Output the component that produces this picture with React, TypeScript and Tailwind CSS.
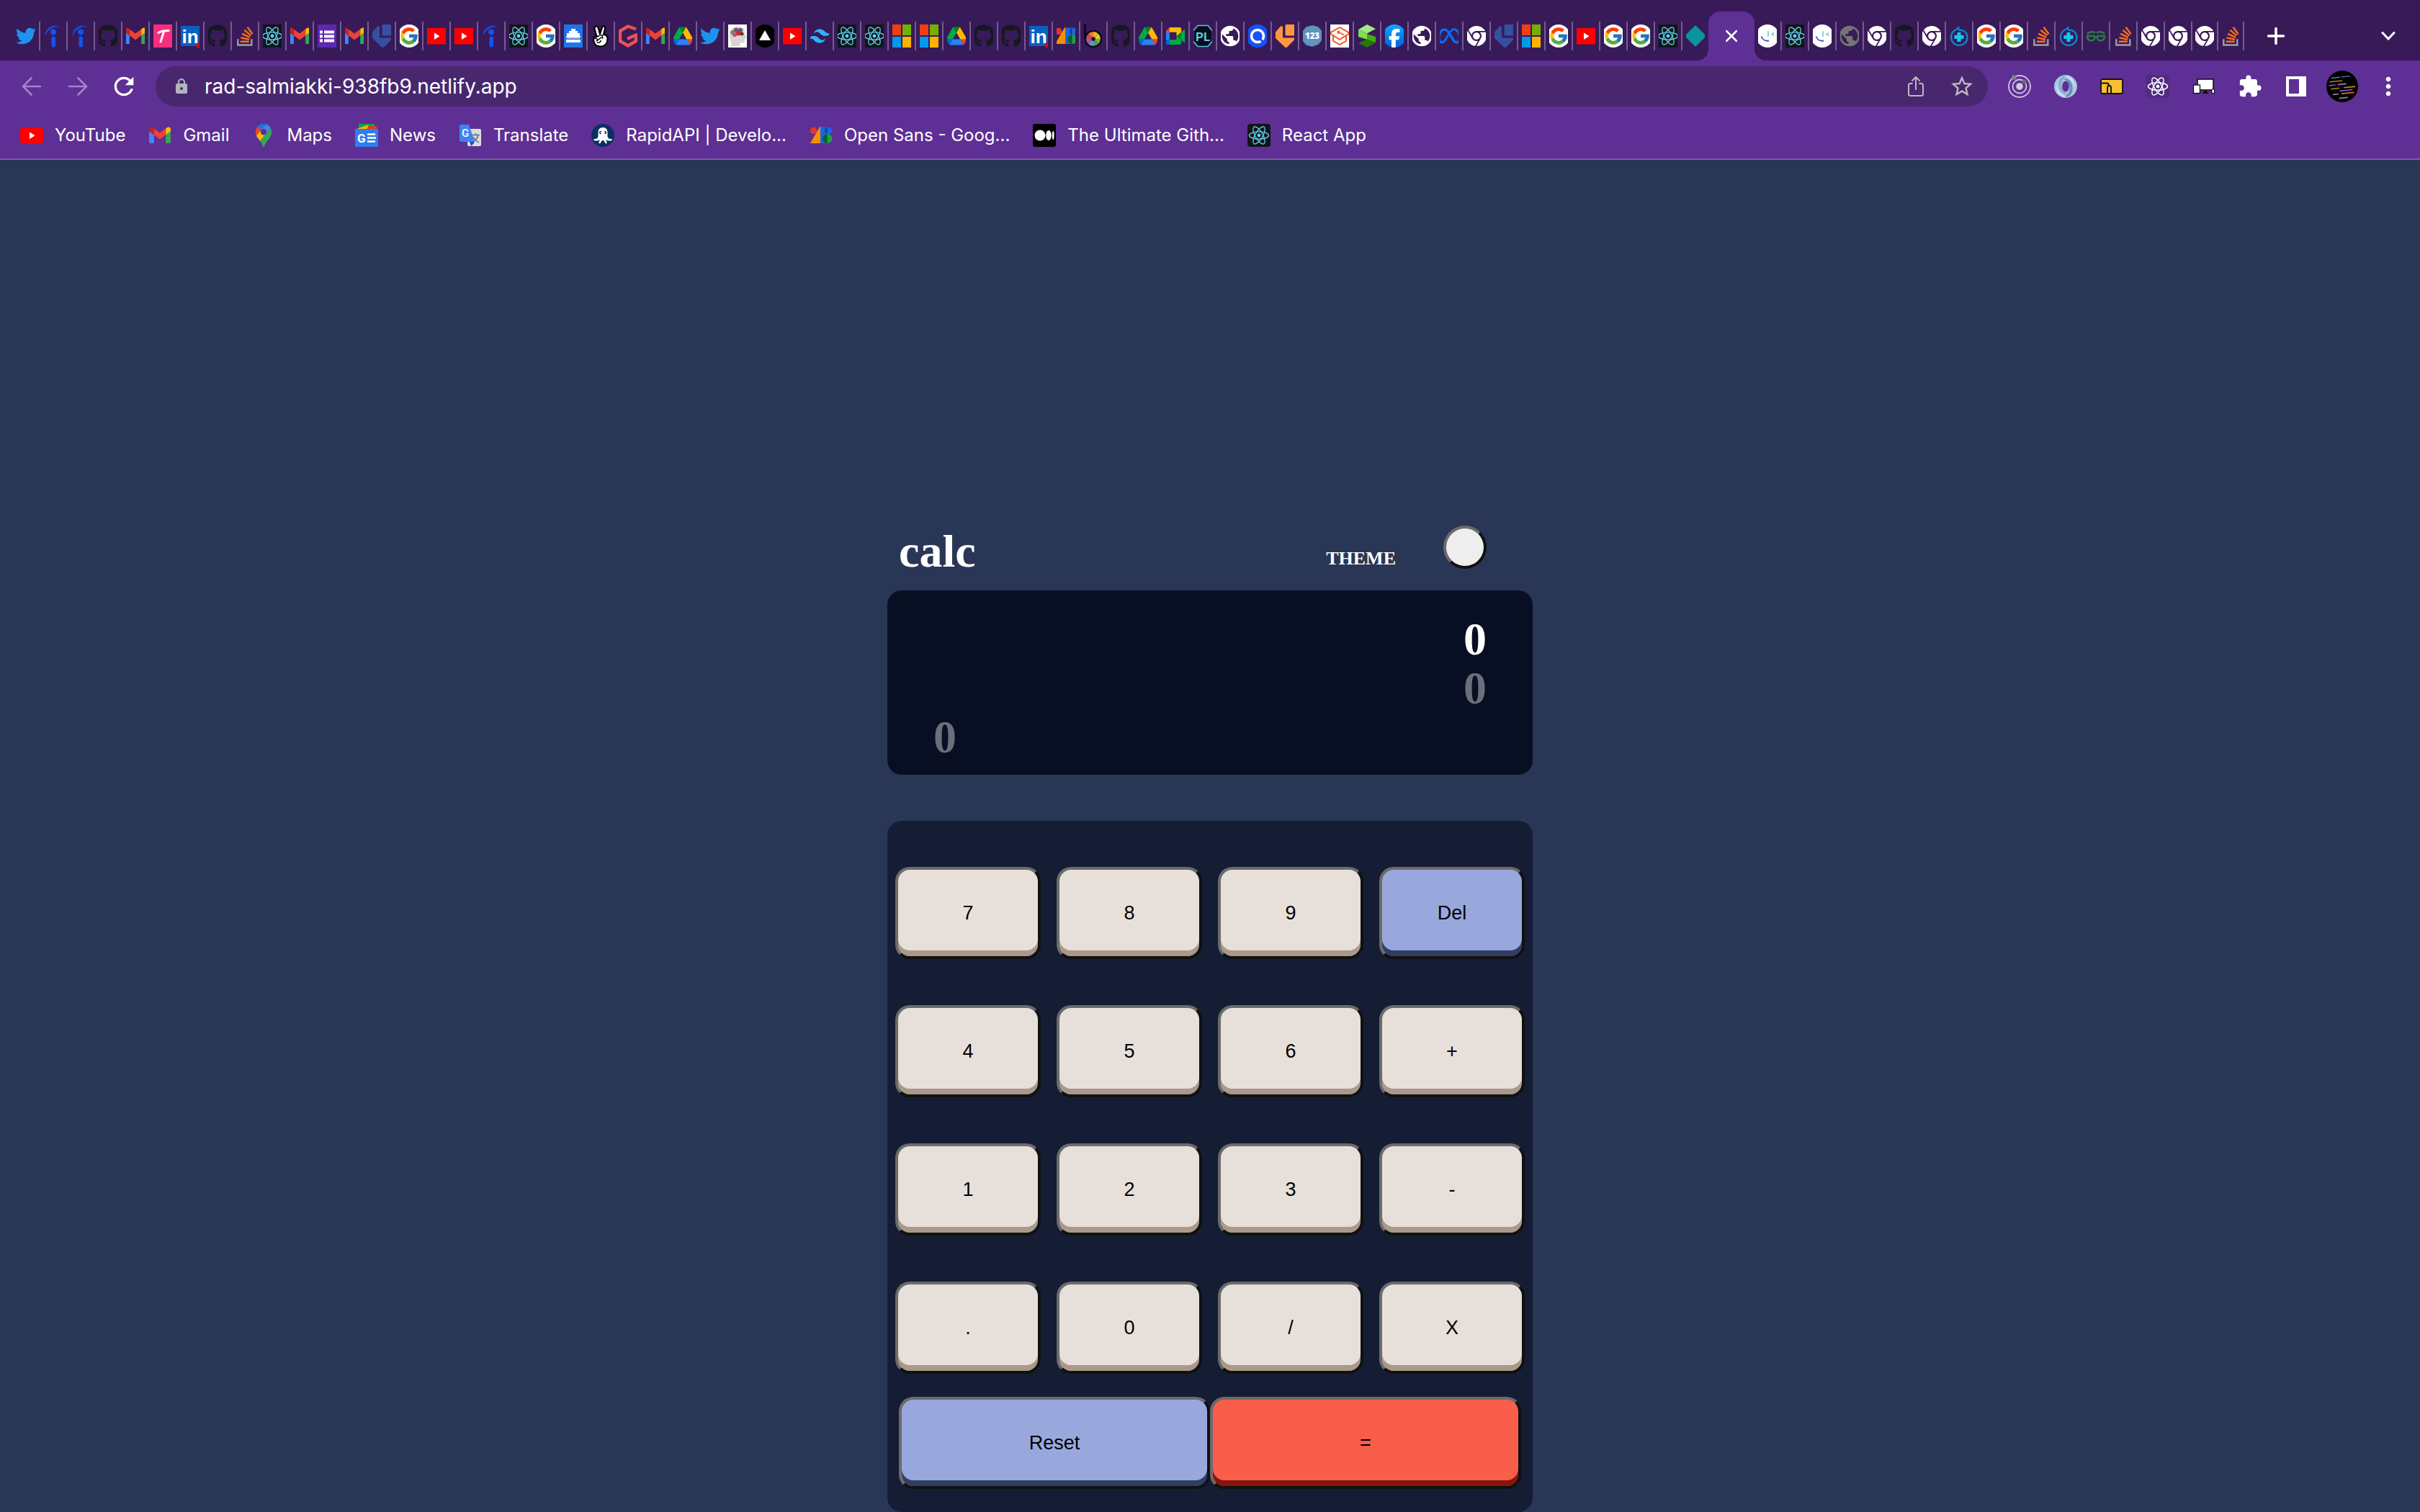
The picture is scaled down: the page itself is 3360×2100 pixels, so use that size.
import type { ReactNode } from "react";
import { FaChrome, FaFacebookF, FaGithub, FaMeta, FaTwitter } from "react-icons/fa6";
import { FcGoogle } from "react-icons/fc";
import { IoShareOutline } from "react-icons/io5";
import { MdExtension, MdLock, MdMoreVert, MdPublic, MdRefresh, MdStarBorder } from "react-icons/md";

function Art({ children, viewBox = "0 0 32 32" }: { children: ReactNode; viewBox?: string }) {
  return (
    <svg viewBox={viewBox} className="size-8 shrink-0" aria-hidden="true">
      {children}
    </svg>
  );
}

function Orbits({ color, width = 1.3 }: { color: string; width?: number }) {
  return (
    <g fill="none" stroke={color} strokeWidth={width}>
      <ellipse cx="16" cy="16" rx="13.5" ry="5.2" />
      <ellipse cx="16" cy="16" rx="13.5" ry="5.2" transform="rotate(60 16 16)" />
      <ellipse cx="16" cy="16" rx="13.5" ry="5.2" transform="rotate(120 16 16)" />
      <circle cx="16" cy="16" r="2.4" fill={color} stroke="none" />
    </g>
  );
}

const Twitter = () => <FaTwitter className="size-7 shrink-0 text-[#1d93f0]" />;
const Github = () => <FaGithub className="size-8 shrink-0 text-[#15191f]" />;
const Chrome = () => <FaChrome className="size-7 shrink-0 text-white" />;
const Globe = () => <MdPublic className="size-[34px] shrink-0 text-white" />;
const GrayGlobe = () => <MdPublic className="size-[34px] shrink-0 text-[#757575]" />;
const Meta = () => <FaMeta className="size-8 shrink-0 text-[#0a6cf0]" />;

const Indeed = () => (
  <Art>
    <circle cx="16" cy="10.5" r="4" fill="#1253f0" />
    <rect x="13.5" y="16.5" width="5.5" height="15" rx="2.6" fill="#1253f0" />
    <path d="M4 16.500C5 8 11 2 18 1.800C21 1.700 23.500 2.600 25.500 4.600C22 2.800 18 2.800 14 5C9 7.600 6 12 4 16.500Z" fill="#1253f0" />
  </Art>
);

const Gmail = () => (
  <Art viewBox="49 31 94 90">
    <path fill="#4285f4" d="M58 108h14V74L52 59v43c0 3.320 2.690 6 6 6" />
    <path fill="#34a853" d="M120 108h14c3.320 0 6-2.690 6-6V59l-20 15" />
    <path fill="#fbbc04" d="M120 48v26l20-15v-8c0-7.420-8.470-11.650-14.400-7.200" />
    <path fill="#ea4335" d="M72 74V48l24 18 24-18v26L96 92" />
    <path fill="#c5221f" d="M52 51v8l20 15V48l-5.600-4.200c-5.940-4.450-14.400-.22-14.400 7.200" />
  </Art>
);

const Drive = () => (
  <Art viewBox="-6 -10.5 99 99">
    <path fill="#0066da" d="m6.600 66.850 3.850 6.650c.8 1.400 1.950 2.500 3.300 3.300l13.750-23.800h-27.500c0 1.550.4 3.100 1.200 4.500z" />
    <path fill="#00ac47" d="m43.650 25-13.750-23.800c-1.350.8-2.500 1.900-3.300 3.300l-25.400 44a9.060 9.060 0 0 0-1.200 4.500h27.500z" />
    <path fill="#ea4335" d="m73.550 76.800c1.350-.8 2.500-1.900 3.300-3.300l1.600-2.750 7.650-13.250c.8-1.400 1.200-2.950 1.200-4.500h-27.500l5.850 11.500z" />
    <path fill="#00832d" d="m43.650 25 13.750-23.800c-1.350-.8-2.900-1.200-4.500-1.200h-18.500c-1.600 0-3.150.45-4.500 1.200z" />
    <path fill="#2684fc" d="m59.800 53h-32.300l-13.750 23.800c1.350.8 2.900 1.200 4.500 1.200h50.800c1.600 0 3.150-.45 4.500-1.200z" />
    <path fill="#ffba00" d="m73.400 26.500-12.700-22c-.8-1.400-1.950-2.500-3.300-3.300l-13.750 23.800 16.150 28h27.450c0-1.550-.4-3.100-1.200-4.500z" />
  </Art>
);

const Meet = () => (
  <Art viewBox="-3 -12 96 96">
    <path fill="#00832d" d="m49.500 36 8.530 9.750 11.470 7.330 2-17.020-2-16.640-11.690 6.440z" />
    <path fill="#0066da" d="M0 51.500V66c0 3.315 2.685 6 6 6h14.500l3-10.960-3-9.540-9.950-3z" />
    <path fill="#e94235" d="M20.500 0 0 20.500l10.550 3 9.950-3 2.950-9.410z" />
    <path fill="#2684fc" d="M20.500 20.500H0v31h20.500z" />
    <path fill="#00ac47" d="M82.600 8.680 69.500 19.420v33.660l13.160 10.790c1.970 1.540 4.850.135 4.850-2.370V11c0-2.535-2.945-3.925-4.910-2.320zM49.500 36v15.500h-29V72h43c3.315 0 6-2.685 6-6V53.080z" />
    <path fill="#ffba00" d="M63.500 0h-43v20.500h29V36l20-16.570V6c0-3.315-2.685-6-6-6z" />
  </Art>
);

const StackOverflow = () => (
  <Art viewBox="6 5 104 104">
    <path fill="#9aa0a6" d="M84.400 93.800V70.600h7.700v30.900H22.600V70.600h7.700v23.200z" />
    <path
      fill="#f9701a"
      d="M38.800 68.400l37.800 7.900 1.600-7.600-37.800-7.900-1.600 7.600zm5-18l35 16.300 3.200-7-35-16.400-3.200 7.100zm9.700-17.200l29.700 24.700 4.900-5.900-29.700-24.700-4.900 5.900zm19.200-18.300l-6.200 4.600 23 31 6.200-4.600-23-31zM38 86h38.600v-7.700H38V86z"
    />
  </Art>
);

const Topmate = () => (
  <Art>
    <rect width="32" height="32" fill="#f62f7c" />
    <path d="M10 11.500C14 8.500 19 9 24 8.500M17.500 9.500C16.500 14 14.500 19 13 24" fill="none" stroke="#fff" strokeWidth="3" strokeLinecap="round" />
  </Art>
);

const LinkedIn = () => (
  <Art>
    <rect x="2" y="2" width="28" height="28" rx="2" fill="#0a5fc2" />
    <text x="4.500" y="26" fill="#fff" fontFamily="Liberation Sans" fontWeight="700" fontSize="26">in</text>
    <circle cx="29" cy="29" r="4.500" fill="#c8101e" />
  </Art>
);

const ReactTile = () => (
  <Art>
    <rect width="32" height="32" fill="#141518" />
    <Orbits color="#5fd3f0" />
  </Art>
);

const Forms = () => (
  <Art>
    <rect width="32" height="32" fill="#5c28b1" />
    <path d="M6 8.500h4v4H6zM12 8.500h14v4H12zM6 14.500h4v4H6zM12 14.500h14v4H12zM6 20.500h4v4H6zM12 20.500h14v4H12z" fill="#fff" />
  </Art>
);

function Pin({ color }: { color: string }) {
  return (
    <Art>
      <rect x="16.500" y="0" width="14" height="15.500" rx="1.500" fill={color} />
      <path d="M3 10.500L10 2.500H13V18.500H29V21.500L19 31.500Q17.500 32.500 16 31.500L3 19Z" fill={color} />
    </Art>
  );
}
const BluePin = () => <Pin color="#3450a0" />;
const OrangePin = () => <Pin color="#fd9644" />;

const Google = () => (
  <span className="flex size-8 shrink-0 items-center justify-center rounded-full bg-white">
    <FcGoogle className="size-7" />
  </span>
);

const YouTube = () => (
  <Art>
    <rect x="0" y="5" width="32" height="22.500" rx="4" fill="#f00" />
    <path d="M13 11.500V21L20.500 16.200Z" fill="#fff" />
  </Art>
);

const CloudTile = () => (
  <Art>
    <rect width="32" height="32" fill="#1f74e8" />
    <path d="M13 6h6v3h3v3h3v4H7v-4h3V9h3z" fill="#fff" />
    <path d="M6 16h20v2H6zM6 21h20v4H6z" fill="#fff" />
    <path d="M7 17.500h18v2H7z" fill="#b6d0f7" />
  </Art>
);

const Peace = () => (
  <Art>
    <path
      d="M8 3.500C9.500 1.500 12 2.500 12.500 4.500L15 13L18 4C19 1.500 22.500 2 22.200 5L20 14C24 14 26 17 25.500 21C25 27 21 30.500 16 30.500C10 30.500 6.500 26.500 6 21.500C5.700 18.500 7.500 17 10.500 17L7.500 6C7.200 5 7.500 4 8 3.500Z"
      fill="#fff"
      stroke="#000"
      strokeWidth="2.200"
    />
    <path d="M10.500 17L14 15.500M7.500 20C10 18.500 12 20 11 22.500L15 19.500L17 17.500M16 14.500L18.500 15.500V20M11 25C14 26 16 24 16.500 22" fill="none" stroke="#000" strokeWidth="1.500" />
  </Art>
);

const HexG = () => (
  <Art>
    <path d="M27 6.500L16 2.500L5 9V23L16 29.500L27 23V14.500L15 20" fill="none" stroke="#e8505b" strokeWidth="4.500" strokeLinejoin="round" />
  </Art>
);

const BrainHead = () => (
  <Art>
    <rect width="32" height="32" fill="#fff" />
    <path d="M7 30C8 25 5 22 5 15C5 7 10 3 17 3C24 3 27 8 26.500 13L28.500 19L26 20V24C26 26 23 25.500 20 25.500L19 30Z" fill="#d9d5d2" />
    <circle cx="9" cy="11" r="3" fill="#6a9a3a" />
    <circle cx="14" cy="8" r="3.500" fill="#87536f" />
    <circle cx="20" cy="8" r="3" fill="#4a5f86" />
    <circle cx="17" cy="12" r="3.500" fill="#d7262e" />
    <circle cx="12" cy="14.500" r="2.800" fill="#d23aa7" />
    <circle cx="22" cy="13" r="2.500" fill="#5a3a25" />
  </Art>
);

const Vercel = () => (
  <Art>
    <circle cx="16" cy="16" r="16" fill="#000" />
    <path d="M16 8L24 22H8Z" fill="#fff" />
  </Art>
);

const Tailwind = () => (
  <Art viewBox="2 2 20 20">
    <path
      fill="#2cb4f5"
      d="M12 6c-2.670 0-4.330 1.330-5 4c1-1.330 2.170-1.830 3.500-1.500c.76.19 1.310.74 1.910 1.350c.98 1 2.090 2.150 4.590 2.150c2.670 0 4.330-1.330 5-4c-1 1.330-2.170 1.830-3.500 1.500c-.76-.19-1.300-.74-1.910-1.350C15.610 7.150 14.500 6 12 6m-5 6c-2.670 0-4.330 1.330-5 4c1-1.330 2.170-1.830 3.500-1.500c.76.19 1.300.74 1.910 1.350C8.390 16.850 9.500 18 12 18c2.670 0 4.330-1.330 5-4c-1 1.330-2.170 1.830-3.500 1.500c-.76-.19-1.300-.74-1.910-1.350C10.610 13.150 9.500 12 7 12"
    />
  </Art>
);

const Microsoft = () => (
  <Art>
    <path d="M0 0H15V15H0Z" fill="#f03e12" />
    <path d="M17 0H32V15H17Z" fill="#72b100" />
    <path d="M0 17H15V32H0Z" fill="#0099ec" />
    <path d="M17 17H32V32H17Z" fill="#ffb300" />
  </Art>
);

const GoogleFonts = () => (
  <Art>
    <path d="M1 27L14 4.500H17V27Z" fill="#f39200" />
    <circle cx="5.500" cy="9.500" r="4.800" fill="#e8352b" />
    <rect x="15" y="4.500" width="9.500" height="22.500" fill="#1a66e8" />
    <circle cx="26" cy="9.500" r="5" fill="#1a66e8" />
    <path d="M24.500 4.800A5 5 0 0 0 24.500 14.300Z" fill="#0d3fa8" />
    <circle cx="25" cy="20.500" r="6.500" fill="#1f9f47" />
    <path d="M24.500 14A6.500 6.500 0 0 0 24.500 27Z" fill="#0a5f2c" />
  </Art>
);

const LensB = () => (
  <Art>
    <path d="M4.500 0V20" stroke="#0e0a1c" strokeWidth="3" />
    <circle cx="16" cy="20" r="12.300" fill="#0e0a1c" />
    <path d="M16 20L16 10A10 10 0 0 1 23 13Z" fill="#f2b322" />
    <path d="M16 20L23 13A10 10 0 0 1 26 20Z" fill="#d9d12a" />
    <path d="M16 20L26 20A10 10 0 0 1 23 27Z" fill="#6cb33e" />
    <path d="M16 20L23 27A10 10 0 0 1 16 30Z" fill="#4a9a68" />
    <path d="M16 20L16 30A10 10 0 0 1 9 27Z" fill="#6f8fd6" />
    <path d="M16 20L9 27A10 10 0 0 1 6 20Z" fill="#a35bb0" />
    <path d="M16 20L6 20A10 10 0 0 1 9 13Z" fill="#cf4a4e" />
    <path d="M16 20L9 13A10 10 0 0 1 16 10Z" fill="#ee7a28" />
    <circle cx="16" cy="20" r="2.800" fill="#1a1030" />
  </Art>
);

const Pl = () => (
  <Art>
    <path d="M9 1.500H23L29.500 9V23L23 30.500H9L2.500 23V9Z" fill="#060d1f" stroke="#58c8d4" strokeWidth="1.600" />
    <text x="16" y="22.500" fill="#62cbd6" textAnchor="middle" fontFamily="Roboto" fontWeight="700" fontSize="17">PL</text>
  </Art>
);

const QRing = () => (
  <Art>
    <circle cx="16" cy="16" r="16" fill="#1652f5" />
    <circle cx="16" cy="16" r="8.500" fill="none" stroke="#fff" strokeWidth="3.600" />
    <path d="M19 19L24 25" stroke="#1652f5" strokeWidth="3" />
  </Art>
);

const OneTwoThree = () => (
  <Art>
    <path d="M16 2L24 4L29 10V21L24 27L16 30L8 28L3 22V10L8 4Z" fill="#5f93c0" stroke="#5f93c0" strokeWidth="1.500" strokeLinejoin="round" />
    <text x="16" y="19.500" fill="#fff" textAnchor="middle" fontFamily="Open Sans" fontWeight="800" fontSize="11.500">123</text>
  </Art>
);

const Scholar = () => (
  <Art>
    <rect width="32" height="32" fill="#fff" />
    <path d="M2 12L16 4L30 12L16 21ZM7 16V23L16 28L25 23V16" fill="none" stroke="#f4511e" strokeWidth="2" strokeLinejoin="round" />
    <path d="M13 10L22 14.500M13 10L16 9M13 10L14.500 13" fill="none" stroke="#f4511e" strokeWidth="1.800" />
  </Art>
);

const Ribbon = () => (
  <Art>
    <path d="M4 7L16 0L28 6L16 12.500Z" fill="#a4e88a" />
    <path d="M4 17L16 13L28 17V25L16 21Z" fill="#43ac10" />
    <path d="M4 7L16 12.500V20.500L4 17Z" fill="#82dd52" />
    <path d="M4 26L16 20.500L28 25L16 32Z" fill="#227a06" />
  </Art>
);

const Facebook = () => (
  <span className="flex size-8 shrink-0 items-end justify-center overflow-hidden rounded-full bg-linear-to-b from-[#18a4fb] to-[#0562e2]">
    <FaFacebookF className="size-[26px] text-white" />
  </span>
);

const Diamond = () => (
  <Art>
    <path d="M16 1.500L30.500 16L16 30.500L1.500 16Z" fill="#0c93a0" stroke="#0c93a0" strokeLinejoin="round" />
  </Art>
);

const Smile = () => (
  <Art>
    <circle cx="16" cy="16" r="16" fill="#fff" />
    <path d="M17 9.500V17M25 11.500L22 13.500L25 15.500" fill="none" stroke="#5cc0c8" strokeWidth="1.400" />
    <path d="M7.500 16.500C9 21 13 23.500 18 22.500" fill="none" stroke="#4a4fb5" strokeWidth="1.800" />
  </Art>
);

const DropPlus = () => (
  <Art>
    <path d="M16 5C8 8 4.500 13 5 18.500C5.500 25 10.500 29 16 29C22.500 29 27.500 24 27.500 18C27.500 12 23 8 19 8C15 8 13.500 6 16 3" fill="none" stroke="#0b86c8" strokeWidth="2.400" />
    <path d="M16 11V24M9.500 17.500H22.500" stroke="#12c8ee" strokeWidth="5" />
  </Art>
);

const Geeks = () => (
  <Art>
    <path
      d="M15 11.500C12 9.500 5 10 4.500 13.500M2.500 16H15M4 16C4 24 13 24 14.500 18.500V16M17 11.500C20 9.500 27 10 27.500 13.500M17 16H29.500M28 16C28 24 19 24 17.500 18.500V16"
      fill="none"
      stroke="#267d43"
      strokeWidth="2.600"
    />
  </Art>
);

type Tab = [name: string, Icon: () => ReactNode];

const leadingTabs: Tab[] = [
  ["Twitter", Twitter], ["Indeed", Indeed], ["Indeed", Indeed], ["GitHub", Github], ["Gmail", Gmail],
  ["Topmate", Topmate], ["LinkedIn", LinkedIn], ["GitHub", Github], ["Stack Overflow", StackOverflow], ["React App", ReactTile],
  ["Gmail", Gmail], ["Forms", Forms], ["Gmail", Gmail], ["LetsUpgrade", BluePin], ["Google", Google],
  ["YouTube", YouTube], ["YouTube", YouTube], ["Indeed", Indeed], ["React App", ReactTile], ["Google", Google],
  ["Cloud", CloudTile], ["Peace", Peace], ["Guvi", HexG], ["Gmail", Gmail], ["Drive", Drive],
  ["Twitter", Twitter], ["Mind", BrainHead], ["Vercel", Vercel], ["YouTube", YouTube], ["Tailwind CSS", Tailwind],
  ["React App", ReactTile], ["React App", ReactTile], ["Microsoft", Microsoft], ["Microsoft", Microsoft], ["Drive", Drive],
  ["GitHub", Github], ["GitHub", Github], ["LinkedIn", LinkedIn], ["Google Fonts", GoogleFonts], ["Lens", LensB],
  ["GitHub", Github], ["Drive", Drive], ["Meet", Meet], ["PL", Pl], ["Site", Globe],
  ["Q", QRing], ["LetsUpgrade", OrangePin], ["123", OneTwoThree], ["Scholar", Scholar], ["Ribbon", Ribbon],
  ["Facebook", Facebook], ["Site", Globe], ["Meta", Meta], ["Chrome", Chrome], ["LetsUpgrade", BluePin],
  ["Microsoft", Microsoft], ["Google", Google], ["YouTube", YouTube], ["Google", Google], ["Google", Google],
  ["React App", ReactTile], ["Netlify", Diamond],
];

const trailingTabs: Tab[] = [
  ["Smile", Smile], ["React App", ReactTile], ["Smile", Smile], ["Site", GrayGlobe], ["Chrome", Chrome], ["GitHub", Github],
  ["Chrome", Chrome], ["Health", DropPlus], ["Google", Google], ["Google", Google], ["Stack Overflow", StackOverflow],
  ["Health", DropPlus], ["GeeksforGeeks", Geeks], ["Stack Overflow", StackOverflow], ["Chrome", Chrome], ["Chrome", Chrome],
  ["Chrome", Chrome], ["Stack Overflow", StackOverflow],
];

function TabButton({ tab: [name, Icon] }: { tab: Tab }) {
  return (
    <button
      type="button"
      aria-label={name}
      className="flex h-10 w-[38px] items-center justify-center border-r-2 border-[#745b92] last:w-9 [.lead>&:last-child]:border-r-0 [.trail>&:nth-last-child(2)]:w-9"
    >
      <span className="flex h-8 w-[26px] items-center justify-center overflow-hidden">
        <Icon />
      </span>
    </button>
  );
}

function TabStrip() {
  return (
    <div className="flex items-center bg-[#381a58] pt-4 pl-[18px]">
      <nav aria-label="Tabs before" className="lead flex">
        {leadingTabs.map((tab, i) => (
          <TabButton key={i} tab={tab} />
        ))}
      </nav>
      <div className="relative flex h-[68px] w-16 items-center justify-center rounded-t-2xl bg-[#5e2f94] before:absolute before:bottom-0 before:-left-4 before:size-4 before:bg-[radial-gradient(circle_at_0_0,transparent_16px,#5e2f94_16px)] after:absolute after:-right-4 after:bottom-0 after:size-4 after:bg-[radial-gradient(circle_at_100%_0,transparent_16px,#5e2f94_16px)]">
        <button type="button" aria-label="Close tab" className="flex size-8 items-center justify-center">
          <svg viewBox="0 0 16 16" className="size-4 text-white" aria-hidden="true">
            <path d="M1 1L15 15M15 1L1 15" stroke="currentColor" strokeWidth="2.500" strokeLinecap="round" />
          </svg>
        </button>
      </div>
      <nav aria-label="Tabs after" className="trail flex">
        {trailingTabs.map((tab, i) => (
          <TabButton key={i} tab={tab} />
        ))}
      </nav>
      <button type="button" aria-label="New tab" className="ml-7 flex size-8 items-center justify-center">
        <svg viewBox="0 0 24 24" className="size-6 text-white" aria-hidden="true">
          <path d="M12 1.500V22.500M1.500 12H22.500" stroke="currentColor" strokeWidth="3.500" strokeLinecap="round" />
        </svg>
      </button>
      <button type="button" aria-label="Search tabs" className="mr-7 ml-auto flex size-8 items-center justify-center">
        <svg viewBox="0 0 20 12" className="h-3 w-5 text-white" aria-hidden="true">
          <path d="M2 1.500L10 10L18 1.500" fill="none" stroke="currentColor" strokeWidth="3" strokeLinecap="round" />
        </svg>
      </button>
    </div>
  );
}

const codeLines: [d: string, color: string][] = [
  ["M8 9h12", "#4a7fc4"],
  ["M22 9h12", "#3a68a8"],
  ["M5 14h18", "#c9701f"],
  ["M4 19h9", "#3d78d8"],
  ["M16 19h12", "#8b8b95"],
  ["M24 24h16", "#e98324"],
  ["M6 24h12", "#b5641f"],
  ["M18 28h18", "#7d5fd0"],
  ["M20 32h18", "#e0761c"],
  ["M8 32h8", "#8f8f8f"],
  ["M16 38h12", "#a0a0a0"],
];

const extensions: Tab[] = [
  ["Radar", () => (
    <Art>
      <g fill="none" stroke="#cfc4dd" strokeWidth="1.800">
        <circle cx="16" cy="16" r="15" />
        <circle cx="16" cy="16" r="9.500" />
      </g>
      <circle cx="16" cy="16" r="4.800" fill="#cfcfd2" />
      <circle cx="8.500" cy="3.500" r="3.200" fill="#84808a" />
      <circle cx="22.500" cy="9.500" r="3" fill="#6f6a75" />
    </Art>
  )],
  ["JSON viewer", () => (
    <Art>
      <circle cx="16" cy="16" r="16" fill="#a9c6e2" />
      <path d="M10 6C19 2 28 10 25 24C22 30 18 31.500 13 31.500C22 27 24 18 19 10C17 7 14 5 10 6Z" fill="#668fb8" />
      <path d="M22 26C13 30 4 22 7 8C9 2 14 0.500 18 0.500C10 5 8 14 13 22C15 25 18 27 22 26Z" fill="#86abcf" />
      <path d="M14 1C23 1 30 8 29 19C27 10 22 4 14 1Z" fill="#d3e3f2" />
      <path d="M18 31C9 31 2 24 3 13C5 22 10 28 18 31Z" fill="#d3e3f2" />
      <ellipse cx="16" cy="16" rx="4.800" ry="7.500" fill="#5e2f94" />
    </Art>
  )],
  ["Mapper", () => (
    <Art>
      <rect x="1" y="6" width="30" height="20" rx="2" fill="#f7c02f" stroke="#111" strokeWidth="1.800" />
      <path d="M1 11.500H9Q12 11.500 12 15M10 26V18Q10 15 12.500 15T15 18V26" fill="none" stroke="#111" strokeWidth="1.900" />
    </Art>
  )],
  ["React tools", () => (
    <Art>
      <rect width="32" height="32" rx="3" fill="#512b83" />
      <Orbits color="#fff" width={1.500} />
    </Art>
  )],
  ["Responsive viewer", () => (
    <Art>
      <rect x="7" y="6" width="22" height="15" fill="#fff" stroke="#111" strokeWidth="1.600" />
      <path d="M16 21.500H20V24H22V26H14V24H16Z" fill="#111" />
      <rect x="1.500" y="14" width="9" height="11.500" fill="#fff" stroke="#111" strokeWidth="1.300" />
      <rect x="27" y="20" width="3.500" height="5.500" fill="#fff" stroke="#111" strokeWidth="1" />
    </Art>
  )],
  ["Extensions", () => <MdExtension className="size-[34px] text-white" />],
  ["Side panel", () => (
    <Art>
      <path d="M2 2H30V30H2ZM6 6V26H20V6Z" fill="#fff" fillRule="evenodd" />
    </Art>
  )],
  ["Profile", () => (
    <svg viewBox="0 0 44 44" className="size-11 rounded-full bg-black" aria-hidden="true">
      <g strokeWidth="1.600" transform="rotate(-6 22 22)">
        {codeLines.map(([d, color]) => (
          <path key={d} d={d} stroke={color} />
        ))}
      </g>
    </svg>
  )],
  ["Menu", () => <MdMoreVert className="size-10 text-white" />],
];

function Toolbar() {
  return (
    <div className="flex items-center bg-[#5e2f94] px-3 py-2">
      <button type="button" aria-label="Back" className="flex w-16 items-center justify-center">
        <svg viewBox="0 0 28 26" className="h-[26px] w-7 text-[#a583c9]" aria-hidden="true">
          <path d="M26 13H2M13.500 1.500L2 13L13.500 24.500" fill="none" stroke="currentColor" strokeWidth="2.600" strokeLinecap="round" />
        </svg>
      </button>
      <button type="button" aria-label="Forward" className="flex w-16 items-center justify-center">
        <svg viewBox="0 0 28 26" className="h-[26px] w-7 text-[#a583c9]" aria-hidden="true">
          <path d="M2 13H26M14.500 1.500L26 13L14.500 24.500" fill="none" stroke="currentColor" strokeWidth="2.600" strokeLinecap="round" />
        </svg>
      </button>
      <button type="button" aria-label="Reload" className="flex w-16 items-center justify-center">
        <MdRefresh className="size-10 text-white" />
      </button>
      <div className="mx-3 flex h-14 flex-1 items-center rounded-full bg-[#48276f] pr-1 pl-5">
        <MdLock className="mr-4 size-6 w-8 text-[#b3b5bd]" />
        <input
          aria-label="Address"
          readOnly
          defaultValue="rad-salmiakki-938fb9.netlify.app"
          className="h-10 flex-1 bg-transparent font-['Inter',sans-serif] text-[28px] text-white outline-none"
        />
        <button type="button" aria-label="Share" className="flex w-16 items-center justify-center">
          <IoShareOutline className="size-8 text-[#bdb9c0]" />
        </button>
        <button type="button" aria-label="Bookmark this page" className="flex w-16 items-center justify-center">
          <MdStarBorder className="size-9 text-[#bdb9c0]" />
        </button>
      </div>
      {extensions.map(([name, Icon]) => (
        <button key={name} type="button" aria-label={name} className="flex w-16 items-center justify-center">
          <Icon />
        </button>
      ))}
    </div>
  );
}

const MapsPin = () => (
  <Art viewBox="-20 0 132.4 132.4">
    <path fill="#1a73e8" d="M60.200 2.200C55.800.8 51 0 46.100 0 32 0 19.300 6.400 10.800 16.500l21.800 18.300L60.200 2.200z" />
    <path fill="#ea4335" d="M10.800 16.500C4.100 24.500 0 34.900 0 46.100c0 8.700 1.700 15.700 4.600 22l28-33.300-21.800-18.300z" />
    <path fill="#4285f4" d="M46.200 28.500c9.800 0 17.700 7.900 17.700 17.700 0 4.300-1.600 8.300-4.200 11.400 0 0 13.900-16.600 27.500-32.700-5.600-10.800-15.300-19-27-22.700L32.600 34.800c3.300-3.800 8.100-6.300 13.600-6.300" />
    <path fill="#fbbc04" d="M46.200 63.800c-9.800 0-17.700-7.900-17.700-17.700 0-4.300 1.500-8.300 4.100-11.300l-28 33.300c4.800 10.600 12.800 19.200 21 29.900l34.100-40.500c-3.300 3.900-8.100 6.300-13.500 6.300" />
    <path fill="#34a853" d="M59.100 109.200c15.400-24.100 33.300-35 33.300-63 0-7.700-1.900-14.900-5.200-21.300L25.600 98c2.600 3.400 5.300 7.300 7.900 11.300 9.400 14.500 6.800 23.100 12.800 23.100s3.400-8.700 12.800-23.200" />
  </Art>
);

const News = () => (
  <Art>
    <path d="M5 0H27V8H5Z" fill="#1e9c46" />
    <path d="M2 7L18 1.500L20 8H2Z" fill="#fbb20a" />
    <path d="M18 3.500L30 3V8H16Z" fill="#e8382c" />
    <rect y="7" width="32" height="25" rx="1" fill="#2f7df0" />
    <text x="3" y="26" fill="#fff" fontFamily="Roboto" fontWeight="700" fontSize="17">G</text>
    <path d="M17 14.500H28M17 19.500H29M17 24.500H28" stroke="#fff" strokeWidth="2.600" />
  </Art>
);

const Translate = () => (
  <Art>
    <rect x="12" y="7" width="19" height="24" rx="2" fill="#dcdce0" />
    <path d="M18 15.500H29M23.500 13V15.500M27 15.500C26 20 22 24 19 25.500M20 18C22 22 25 24.500 28 26" fill="none" stroke="#5f7280" strokeWidth="1.600" />
    <path d="M15 25H22L17.500 31Z" fill="#1c45b8" />
    <path d="M3 1H14L22 25H3Q1 25 1 23V3Q1 1 3 1Z" fill="#3f82f2" />
    <text x="4" y="18" fill="#fff" fontFamily="Roboto" fontWeight="500" fontSize="15">G</text>
  </Art>
);

const Octopus = () => (
  <Art>
    <circle cx="16" cy="16" r="16" fill="#0b2f63" />
    <path d="M16 5C11.500 5 9.500 8 9.500 12V17C9.500 20 7 21.500 3.500 21V23C7 24 10 23.500 12 22L10 26.500L12 27.500L15 23H17L20 27.500L22 26.500L20 22C22 23.500 25 24 28.500 23V21C25 21.500 22.500 20 22.500 17V12C22.500 8 20.500 5 16 5Z" fill="#fff" />
    <path d="M13.500 10L11.500 12L13.500 14M18.500 10L20.500 12L18.500 14" fill="none" stroke="#0b2f63" strokeWidth="1.500" />
  </Art>
);

const Medium = () => (
  <Art>
    <rect width="32" height="32" rx="3" fill="#000" />
    <ellipse cx="10" cy="16" rx="7.500" ry="7.500" fill="#fff" />
    <ellipse cx="22" cy="16" rx="3.800" ry="7" fill="#fff" />
    <ellipse cx="28.200" cy="16" rx="1.400" ry="6.200" fill="#fff" />
  </Art>
);

const ReactRounded = () => (
  <Art>
    <rect width="32" height="32" rx="4" fill="#141518" />
    <Orbits color="#5fd3f0" />
  </Art>
);

const bookmarks: [label: string, Icon: () => ReactNode][] = [
  ["YouTube", YouTube],
  ["Gmail", Gmail],
  ["Maps", MapsPin],
  ["News", News],
  ["Translate", Translate],
  ["RapidAPI | Develo...", Octopus],
  ["Open Sans - Goog...", GoogleFonts],
  ["The Ultimate Gith...", Medium],
  ["React App", ReactRounded],
];

function BookmarksBar() {
  return (
    <nav aria-label="Bookmarks" className="flex h-[66px] items-center gap-8 border-b-2 border-[#8259ad] bg-[#5e2f94] px-7">
      {bookmarks.map(([label, Icon]) => (
        <a key={label} href="#" className="flex items-center gap-4 font-['Inter',sans-serif] text-2xl whitespace-nowrap text-white">
          <Icon />
          {label}
        </a>
      ))}
    </nav>
  );
}

const keys = ["7", "8", "9", "Del", "4", "5", "6", "+", "1", "2", "3", "-", ".", "0", "/", "X"];

const keyBase =
  "h-32 rounded-[20px] border-4 border-t-[#6b6b6b] border-r-[#111] border-b-[#111] border-l-[#6b6b6b] font-['Liberation_Sans',sans-serif] text-[27px] font-normal text-black";
const sand = "bg-[#e7e0da] shadow-[inset_0_-8px_0_#aa998a]";
const blue = "bg-[#98a8dd] shadow-[inset_0_-8px_0_#303e63]";
const red = "bg-[#f95e4b] shadow-[inset_0_-8px_0_#87150c]";

function Calculator() {
  return (
    <section aria-label="Calculator" className="mx-auto w-4xl font-['Liberation_Serif',serif] font-bold text-white">
      <header className="flex items-start pr-16 pl-4 pb-[18px]">
        <h1 className="text-[64px] leading-[72px]">calc</h1>
        <label htmlFor="theme" className="mt-[30px] mr-[66px] ml-auto text-[26px] leading-8">
          THEME
        </label>
        <button
          id="theme"
          type="button"
          className="size-[60px] rounded-full border-4 border-t-[#6b6b6b] border-r-[#111] border-b-[#111] border-l-[#6b6b6b] bg-[#eee]"
        />
      </header>
      <div className="rounded-[20px] bg-[#080f22] px-16 pt-[34px] pb-[18px] text-[64px] leading-[68px]">
        <p className="text-right">0</p>
        <p className="text-right text-[#6b6f7a]">0</p>
        <p className="text-[#6b6f7a]">0</p>
      </div>
      <div className="mt-16 rounded-[20px] bg-[#151d34] pt-16 pb-8">
        <div className="grid grid-cols-4 gap-x-[22px] gap-y-16 px-[11px]">
          {keys.map((key) => (
            <button key={key} type="button" className={`${keyBase} ${key === "Del" ? blue : sand}`}>
              {key}
            </button>
          ))}
        </div>
        <div className="mt-8 grid grid-cols-2 px-4">
          <button type="button" className={`${keyBase} ${blue}`}>Reset</button>
          <button type="button" className={`${keyBase} ${red}`}>=</button>
        </div>
      </div>
    </section>
  );
}

export default function App() {
  return (
    <div className="flex min-h-screen flex-col bg-[#2a3656]">
      <TabStrip />
      <Toolbar />
      <BookmarksBar />
      <main className="flex flex-1 flex-col justify-end">
        <Calculator />
      </main>
    </div>
  );
}
